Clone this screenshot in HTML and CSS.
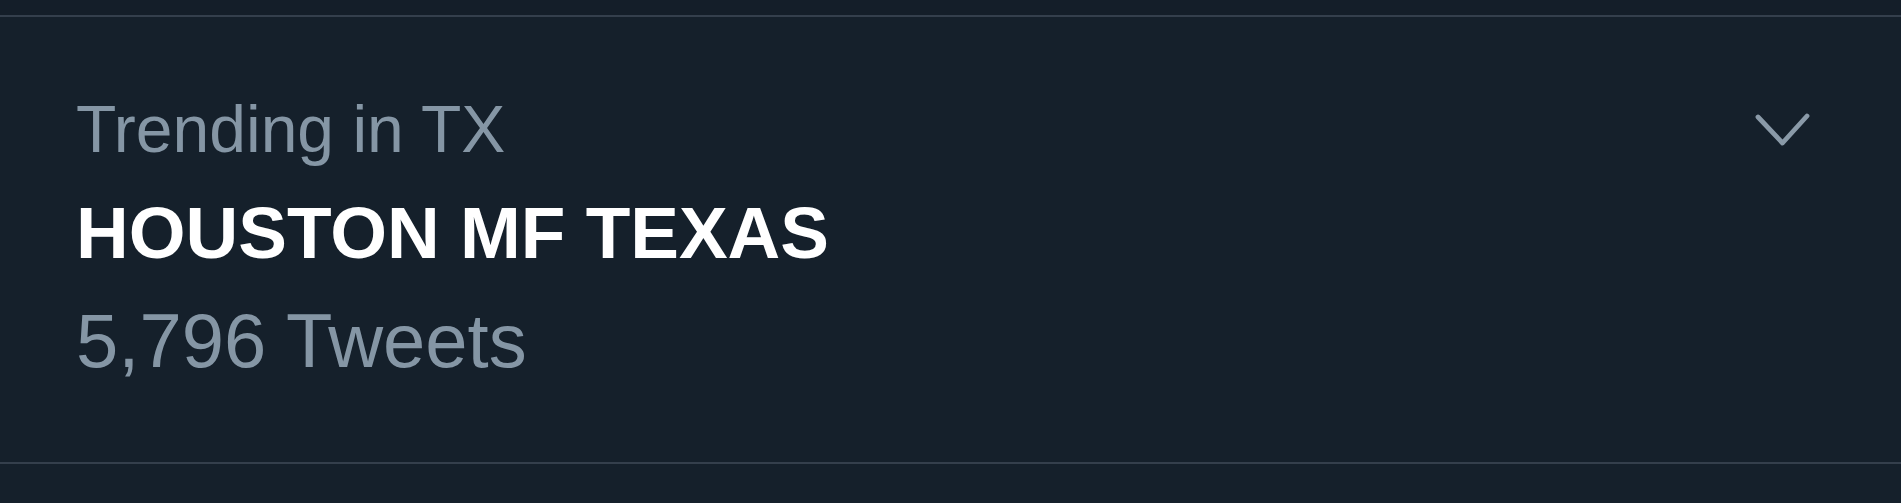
FILE: index.html
```html
<!DOCTYPE html>
<html lang="en">
<head>
<meta charset="utf-8">
<title>Trending in TX</title>
<link rel="stylesheet" href="styles.css">
</head>
<body>
<div class="page">
  <div class="top-gap"></div>
  <div class="trend">
    <div class="trend-text">
      <div class="context">Trending in TX</div>
      <div class="name">HOUSTON MF TEXAS</div>
      <div class="count">5,796 Tweets</div>
    </div>
    <svg class="chevron" width="60" height="40" viewBox="0 0 60 40" aria-hidden="true">
      <path d="M6 7 L30.5 33 L55 6" fill="none" stroke="#8a9aa8" stroke-width="4.8" stroke-linecap="round" stroke-linejoin="round"/>
    </svg>
  </div>
</div>
</body>
</html>
```

FILE: styles.css
```css
html, body {
  margin: 0;
  padding: 0;
  background: #15202b;
}

.page {
  width: 1901px;
  height: 503px;
  background: #15202b;
  font-family: "Liberation Sans", Arial, sans-serif;
}

.top-gap {
  height: 15px;
  background: #141e29;
}

.trend {
  display: flex;
  align-items: flex-start;
  border-top: 2px solid #343f4c;
  border-bottom: 2px solid #343f4c;
  padding: 74px 89px 79px 76px;
}

.trend-text {
  flex: 1;
  display: flex;
  flex-direction: column;
}

.context {
  font-size: 66px;
  line-height: 76px;
  color: #8596a5;
}

.name {
  margin-top: 24px;
  font-size: 73px;
  line-height: 84px;
  font-weight: 700;
  color: #ffffff;
}

.count {
  margin-top: 24px;
  font-size: 76px;
  line-height: 84px;
  color: #8596a5;
}

.chevron {
  display: block;
  margin-top: 19px;
}
```
